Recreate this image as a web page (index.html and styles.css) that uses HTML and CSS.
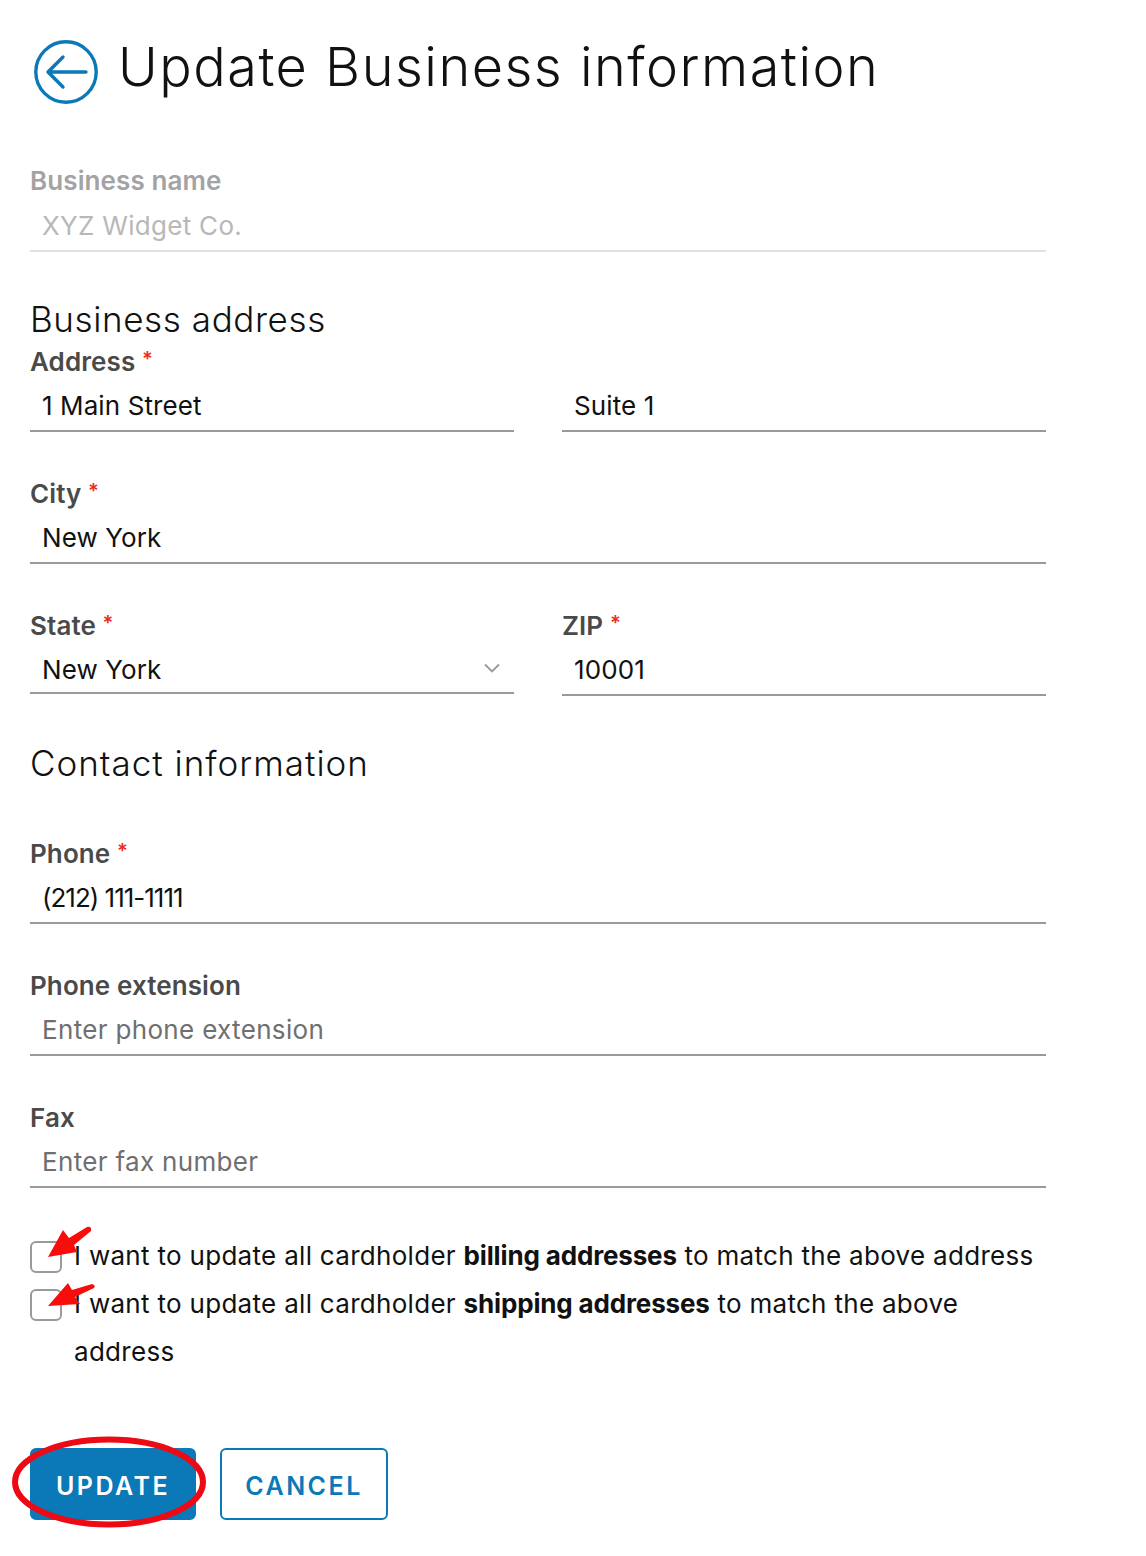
FILE: index.html
```html
<!DOCTYPE html>
<html lang="en">
<head>
  <meta charset="utf-8" />
  <title>Update Business information</title>
  <link rel="stylesheet" href="styles.css">
</head>
<body>
  <header class="page-head">
    <svg class="back-icon" viewBox="0 0 64 64" width="64" height="64" aria-hidden="true">
      <circle cx="32" cy="32" r="30.2" fill="none" stroke="#0b78b8" stroke-width="3.4"/>
      <path d="M52 32H15M29 17L14 32L29 47" fill="none" stroke="#0b78b8" stroke-width="3.4" stroke-linecap="round" stroke-linejoin="round"/>
    </svg>
    <h1>Update Business information</h1>
  </header>

  <form class="form">
    <div class="field field-disabled">
      <label>Business name</label>
      <div class="value">XYZ Widget Co.</div>
    </div>

    <h2 class="heading-address">Business address</h2>
    <div class="two-col">
      <div class="field">
        <label>Address <span class="req">*</span></label>
        <div class="value">1 Main Street</div>
      </div>
      <div class="field">
        <label>&nbsp;</label>
        <div class="value">Suite 1</div>
      </div>
    </div>

    <div class="field">
      <label>City <span class="req">*</span></label>
      <div class="value">New York</div>
    </div>

    <div class="two-col">
      <div class="field field-select">
        <label>State <span class="req">*</span></label>
        <div class="value">
          New York
          <svg class="chevron" viewBox="0 0 16 10" width="16" height="10" aria-hidden="true">
            <path d="M1 1.5L8 8.5L15 1.5" fill="none" stroke="#999" stroke-width="1.8"/>
          </svg>
        </div>
      </div>
      <div class="field">
        <label>ZIP <span class="req">*</span></label>
        <div class="value">10001</div>
      </div>
    </div>

    <h2 class="heading-contact">Contact information</h2>

    <div class="field">
      <label>Phone <span class="req">*</span></label>
      <div class="value value-phone">(212) 111-1111</div>
    </div>
    <div class="field">
      <label>Phone extension</label>
      <div class="value placeholder">Enter phone extension</div>
    </div>
    <div class="field">
      <label>Fax</label>
      <div class="value placeholder">Enter fax number</div>
    </div>

    <div class="checks">
      <div class="check">
        <span class="box"></span>
        <p>I want to update all cardholder <b>billing addresses</b> to match the above address</p>
        <svg class="arrow" viewBox="0 0 46 32" width="46" height="32" aria-hidden="true">
          <path d="M1 31L16 4L22 12L40 1Q45 0 44 5L27 19L30 26Z" fill="#f80d0d"/>
        </svg>
      </div>
      <div class="check">
        <span class="box"></span>
        <p>I want to update all cardholder <b>shipping addresses</b> to match the above address</p>
        <svg class="arrow arrow-2" viewBox="0 0 50 28" width="50" height="28" aria-hidden="true">
          <path d="M1 25L21 2L25 9L45 3Q49 4 47 7L28 16L33 23Z" fill="#f80d0d"/>
        </svg>
      </div>
    </div>

    <div class="actions">
      <button type="button" class="btn btn-primary">UPDATE</button>
      <button type="button" class="btn btn-outline">CANCEL</button>
      <svg class="circle-mark" viewBox="0 0 196 92" width="196" height="92" aria-hidden="true">
        <ellipse cx="98" cy="46" rx="94" ry="42.5" fill="none" stroke="#ee0a14" stroke-width="6"/>
      </svg>
    </div>
  </form>
</body>
</html>
```

FILE: styles.css
```css
:root {
  --blue: #0b78b8;
  --text: #111;
  --label: #4a4a4a;
  --line: #9a9a9a;
}

* { box-sizing: border-box; margin: 0; padding: 0; }

body {
  font-family: Inter, "Liberation Sans", sans-serif;
  color: var(--text);
  background: #fff;
  padding: 0 100px 36px 30px;
  font-size: 26px;
}

.page-head {
  display: flex;
  align-items: center;
  gap: 20px;
  padding: 40px 0 0 4px;
  height: 104px;
}

.back-icon { flex: none; }

h1 {
  font-size: 54px;
  font-weight: 300;
  line-height: 54px;
  letter-spacing: 1.5px;
  margin-top: -10px;
  white-space: nowrap;
}

h2 {
  font-size: 35px;
  font-weight: 300;
  line-height: 40px;
}

.heading-address { margin-top: 18px; margin-bottom: 7px; letter-spacing: .6px; }
.heading-contact { margin-top: 1px; margin-bottom: 55px; letter-spacing: 1px; }

.form { padding-top: 61px; }

.field { height: 132px; }

label {
  display: block;
  padding-top: 1px;
  font-size: 26px;
  font-weight: 600;
  line-height: 30px;
  letter-spacing: .1px;
  color: var(--label);
}

.req { color: #ee2a1a; font-size: 20px; line-height: 0; vertical-align: 5px; }

.value {
  position: relative;
  height: 55px;
  padding: 13px 0 0 12px;
  line-height: 32px;
  letter-spacing: .1px;
  border-bottom: 2px solid var(--line);
}

.field-select .value { height: 53px; }

.value-phone { letter-spacing: -1px; }

.placeholder { color: #6f6f6f; letter-spacing: .33px; }

.field-disabled { height: 116px; }
.field-disabled label { color: #a3a3a3; }
.field-disabled .value {
  height: 56px;
  padding-top: 14px;
  color: #b8b8b8;
  letter-spacing: .3px;
  border-bottom-color: #e0e0e0;
}

.chevron { position: absolute; right: 14px; top: 22px; }

.two-col {
  display: grid;
  grid-template-columns: 1fr 1fr;
  column-gap: 48px;
}

.checks { margin-top: -3px; }

.check {
  position: relative;
  display: flex;
  align-items: flex-start;
  gap: 12px;
}

.box {
  flex: none;
  width: 32px;
  height: 32px;
  margin-top: 10px;
  border: 2px solid var(--line);
  border-radius: 6px;
}

.check p { padding-top: 1px; margin-bottom: -1px; line-height: 48px; letter-spacing: .3px; }
.check b { letter-spacing: -.15px; }

.arrow { position: absolute; left: 17px; top: -5px; }
.arrow-2 { top: 2px; }

.actions {
  position: relative;
  display: flex;
  gap: 24px;
  margin-top: 73px;
}

.btn {
  height: 72px;
  padding-top: 3px;
  font-family: inherit;
  font-size: 25px;
  font-weight: 600;
  letter-spacing: 2.5px;
  border-radius: 6px;
  border: 2px solid var(--blue);
}

.btn-primary { width: 166px; background: var(--blue); color: #fff; }
.btn-outline { width: 168px; background: #fff; color: var(--blue); }

.circle-mark { position: absolute; left: -19px; top: -12px; }
```
